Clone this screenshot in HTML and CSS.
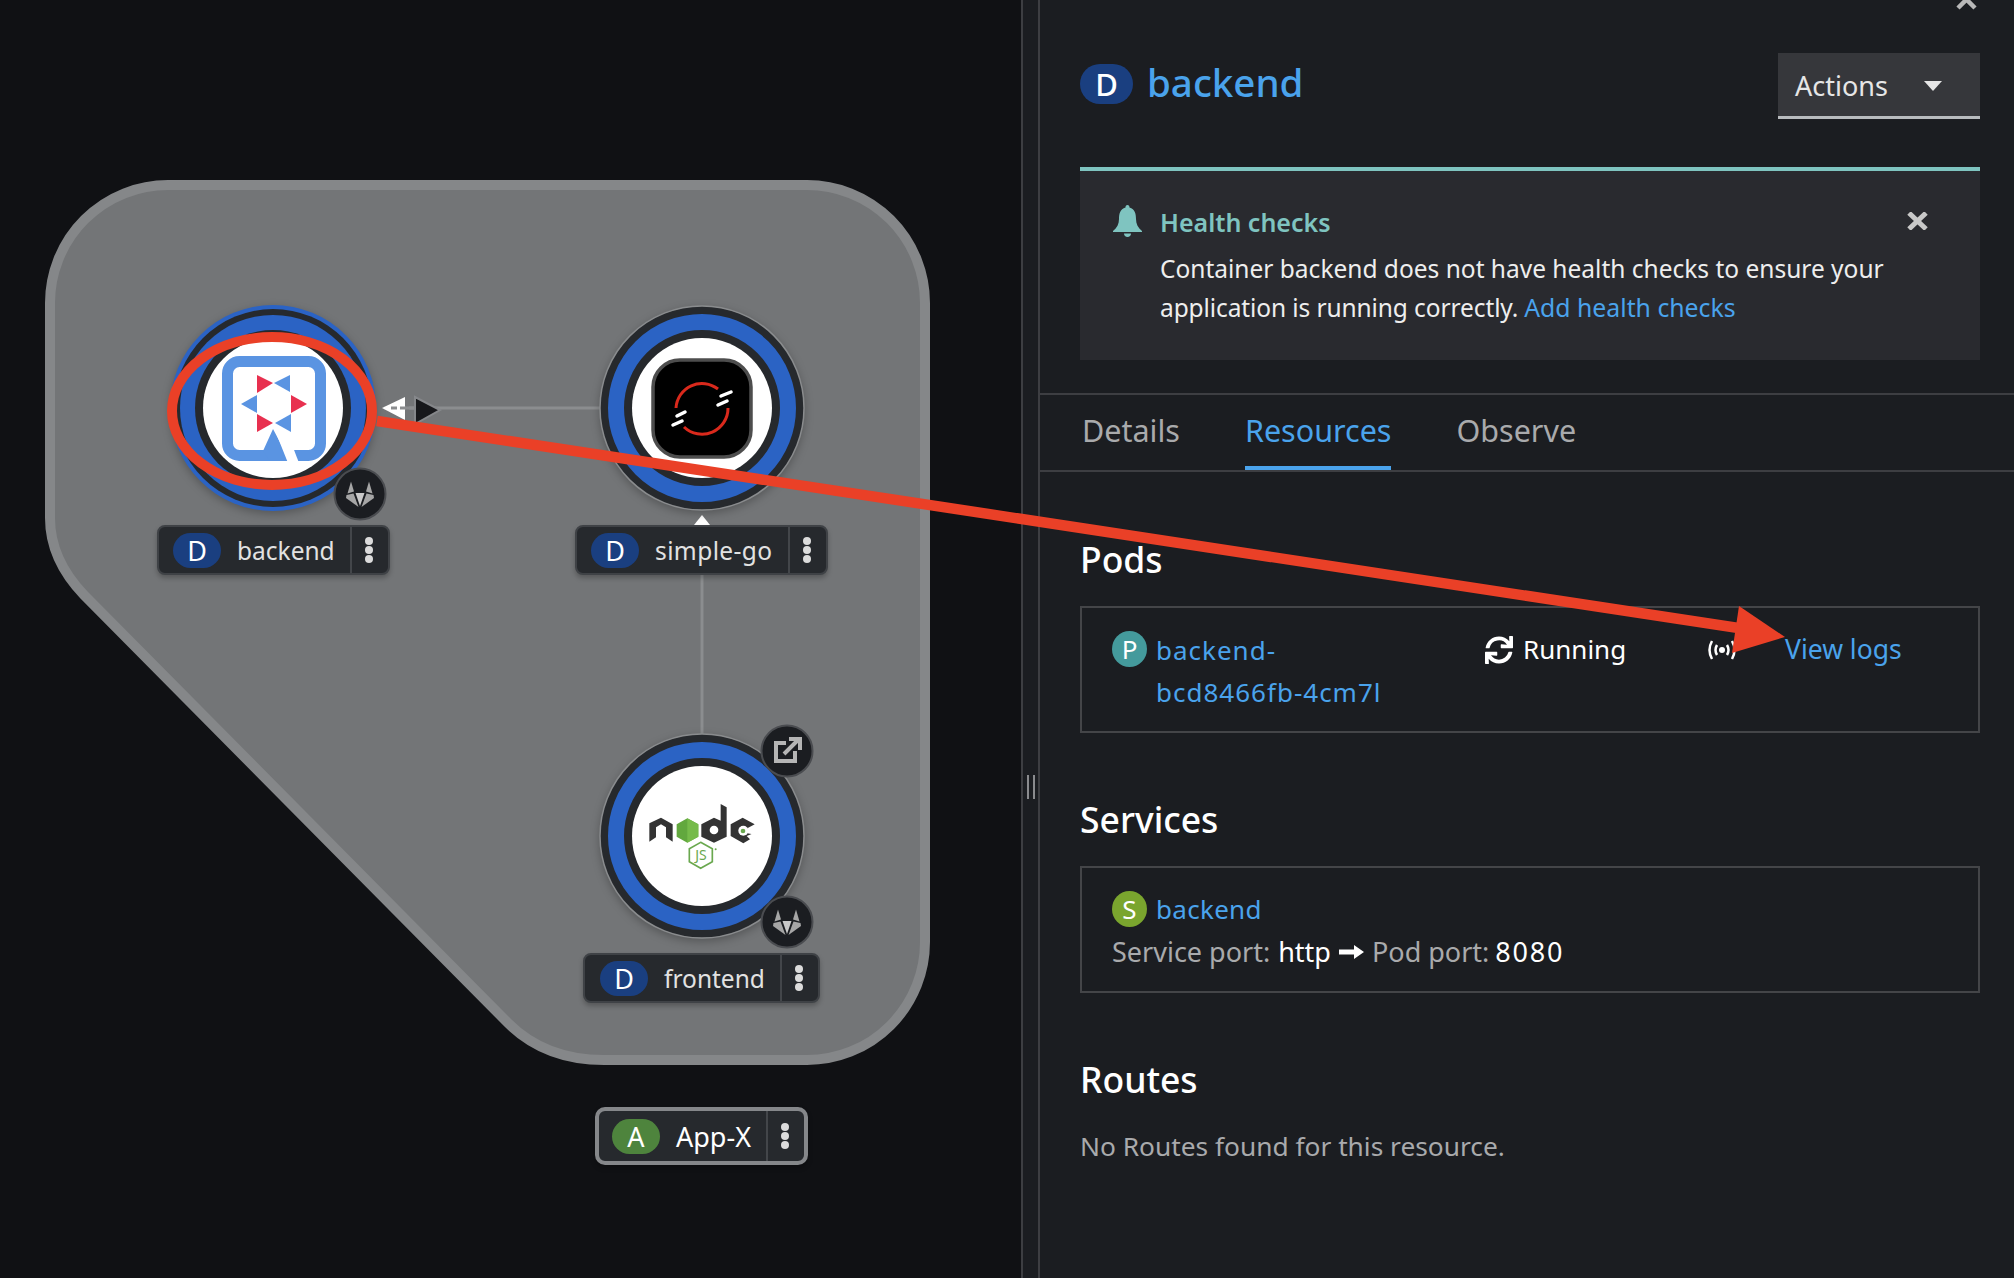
FILE: index.html
```html
<!DOCTYPE html>
<html lang="en">
<head>
    <meta charset="UTF-8">
    <meta name="viewport" content="width=device-width, initial-scale=1.0">
    <title>Topology - backend</title>
    <link rel="stylesheet" href="styles.css">
</head>
<body>
    <svg class="defs" width="0" height="0">
        <symbol id="kebab" viewBox="0 0 8 26">
            <circle cx="4" cy="4" r="4"></circle>
            <circle cx="4" cy="13" r="4"></circle>
            <circle cx="4" cy="22" r="4"></circle>
        </symbol>
        <symbol id="gitlab" viewBox="-14 -13 28 27" overflow="visible">
            <polygon points="-9,-12.500 -12.500,-0.500 -6,-2.500" fill="#a6a6a6"></polygon>
            <polygon points="9,-12.500 12.500,-0.500 6,-2.500" fill="#a6a6a6"></polygon>
            <polygon points="-13.500,1 -14,4 -1.500,13 -6.500,-0.500" fill="#a6a6a6"></polygon>
            <polygon points="13.500,1 14,4 1.500,13 6.500,-0.500" fill="#a6a6a6"></polygon>
            <polygon points="-4.500,-1 4.500,-1 0,12" fill="#c9c9c9"></polygon>
        </symbol>
    </svg>

    <div class="topology">
        <svg class="graph" width="1021" height="1278" viewBox="0 0 1021 1278">
            <!-- application group -->
            <path class="group" d="M168 185H807A118 118 0 0 1 925 303V942A118 118 0 0 1 807 1060H604C565 1060 533 1048 508 1023L84 595C62 572 50 545 50 518V303A118 118 0 0 1 168 185Z"></path>

            <!-- connectors -->
            <line class="edge" x1="384" y1="408" x2="604" y2="408"></line>
            <line class="edge" x1="702" y1="575" x2="702" y2="736"></line>
            <polygon points="382,408 405,397 405,420" fill="#ffffff"></polygon>
            <line class="edge-dash" x1="391" y1="408" x2="414" y2="408"></line>
            <polygon class="edge-head" points="415,397 440,410 415,424"></polygon>
            <polygon points="702,515 710,525 694,525" fill="#ffffff"></polygon>

            <!-- backend node -->
            <g class="node">
                <circle cx="273" cy="408" r="103" fill="#2b63c4"></circle>
                <circle cx="273" cy="408" r="99" fill="#26292d"></circle>
                <circle cx="273" cy="408" r="93" fill="#2b63c4"></circle>
                <circle cx="273" cy="408" r="78" fill="#26292d"></circle>
                <circle cx="273" cy="408" r="70" fill="#ffffff"></circle>
            </g>
            <rect x="227.500" y="361.500" width="93" height="94" rx="12" fill="none" stroke="#5a94e2" stroke-width="11"></rect>
            <polygon points="273,429 263,451 270,461 290,461" fill="#5a94e2"></polygon>
            <polygon points="274,428 288,463 299,463 291,442" fill="#ffffff"></polygon>
            <g fill="#e8304f">
                <polygon points="257,375 273,383 257,393"></polygon>
                <polygon points="307,404 291,395 291,413"></polygon>
                <polygon points="257,414 273,423 257,432"></polygon>
            </g>
            <g fill="#5a94e2">
                <polygon points="290,375 274,383 290,392"></polygon>
                <polygon points="241,404 257,395 257,413"></polygon>
                <polygon points="291,414 275,423 291,432"></polygon>
            </g>
            <circle class="decorator" cx="360" cy="494" r="25.500"></circle>
            <use href="#gitlab" x="346" y="481" width="28" height="27"></use>

            <!-- simple-go node -->
            <g class="node">
                <circle cx="702" cy="408" r="102" fill="#26292d" stroke="#8a8c8e" stroke-width="1.500"></circle>
                <circle cx="702" cy="408" r="86" fill="none" stroke="#2b63c4" stroke-width="16"></circle>
                <circle cx="702" cy="408" r="70" fill="#ffffff"></circle>
            </g>
            <rect x="653" y="360" width="98" height="97" rx="27" fill="#000000" stroke="#4d4d4d" stroke-width="3.500"></rect>
            <path d="M718 389A26 26 0 0 0 676 408M728 408A26 26 0 0 1 684 427" fill="none" stroke="#d9291c" stroke-width="3"></path>
            <path d="M721 396L731 392M718 405L727 401M677 416L685 412M673 425L682 421" fill="none" stroke="#ffffff" stroke-width="3.500" stroke-linecap="round"></path>

            <!-- frontend node -->
            <g class="node">
                <circle cx="702" cy="836" r="102" fill="#26292d" stroke="#8a8c8e" stroke-width="1.500"></circle>
                <circle cx="702" cy="836" r="86" fill="none" stroke="#2b63c4" stroke-width="16"></circle>
                <circle cx="702" cy="836" r="70" fill="#ffffff"></circle>
            </g>
            <g transform="translate(630 780) scale(0.3333)">
                <polygon points="58,130 93,113 128,133 128,185 108,172 108,142 93,133 78,142 78,172 58,185" fill="#333333"></polygon>
                <polygon points="172,115 205,133 205,170 172,188 140,170 140,133" fill="#62a83e"></polygon>
                <polygon points="172,115 205,133 205,170 172,188" fill="#76bb4a"></polygon>
                <polygon points="272,72 290,82 290,170 252,188 214,170 214,133 252,113 272,122" fill="#333333"></polygon>
                <circle cx="252" cy="150" r="13" fill="#ffffff"></circle>
                <polygon points="338,113 374,133 374,158 350,168 360,178 340,190 302,168 302,133" fill="#333333"></polygon>
                <circle cx="340" cy="152" r="15" fill="#ffffff"></circle>
                <polygon points="352,145 380,130 380,165 352,160" fill="#ffffff"></polygon>
                <circle cx="339" cy="153" r="7" fill="#6aa84f"></circle>
                <polygon points="212,187 247,206 247,245 212,265 178,245 178,206" fill="none" stroke="#6aa84f" stroke-width="5"></polygon>
                <text class="js-mark" x="213" y="240">JS</text>
                <circle cx="257" cy="208" r="3" fill="#6aa84f"></circle>
            </g>
            <circle class="decorator" cx="787" cy="751" r="25.500"></circle>
            <path d="M786 743H776V761H795V751M784 754L798 740M789 739H800V750" fill="none" stroke="#b5b5b5" stroke-width="4"></path>
            <circle class="decorator" cx="787" cy="922" r="25.500"></circle>
            <use href="#gitlab" x="773" y="909" width="28" height="27"></use>
        </svg>

        <div class="node-label label-backend">
            <span class="badge badge-deploy">D</span>
            <span class="node-name">backend</span>
            <span class="node-menu"><svg width="8" height="26"><use href="#kebab"></use></svg></span>
        </div>
        <div class="node-label label-go">
            <span class="badge badge-deploy">D</span>
            <span class="node-name">simple-go</span>
            <span class="node-menu"><svg width="8" height="26"><use href="#kebab"></use></svg></span>
        </div>
        <div class="node-label label-frontend">
            <span class="badge badge-deploy">D</span>
            <span class="node-name">frontend</span>
            <span class="node-menu"><svg width="8" height="26"><use href="#kebab"></use></svg></span>
        </div>
        <div class="node-label label-app">
            <span class="badge badge-app">A</span>
            <span class="node-name">App-X</span>
            <span class="node-menu"><svg width="8" height="26"><use href="#kebab"></use></svg></span>
        </div>
    </div>

    <div class="resizer"><span class="grip"></span></div>

    <div class="panel">
        <svg class="panel-close" width="21" height="19" viewBox="0 0 21 19">
            <path d="M2 0L19 17M19 0L2 17" fill="none" stroke="#b8b8b8" stroke-width="4.500"></path>
        </svg>

        <div class="panel-header">
            <div class="panel-title">
                <span class="title-badge">D</span>
                <a class="title-link">backend</a>
            </div>
            <div class="actions">Actions<span class="caret"></span></div>
        </div>

        <div class="alert">
            <svg class="alert-icon" width="29" height="32" viewBox="0 0 29 32">
                <path d="M14.500 0c1.400 0 2 1 2 2.500C22 4 23 9 23 14c0 5 2 9 6 12v1H0v-1c4-3 6-7 6-12C6 9 7 4 12.500 2.500C12.500 1 13 0 14.500 0zM11 28.500h7c0 2-1.500 3.500-3.500 3.500S11 30.500 11 28.500z"></path>
            </svg>
            <div class="alert-body">
                <div class="alert-title">Health checks</div>
                <div>Container backend does not have health checks to ensure your</div>
                <div class="alert-line">
                    <span class="alert-tight">application is running correctly.</span>
                    <a class="link alert-link">Add health checks</a>
                </div>
            </div>
            <svg class="alert-close" width="21" height="18" viewBox="0 0 21 18">
                <path d="M2 1L19 17M19 1L2 17" fill="none" stroke="#c8c8c8" stroke-width="5"></path>
            </svg>
        </div>

        <div class="tabs">
            <span class="tab">Details</span>
            <span class="tab tab-active">Resources</span>
            <span class="tab">Observe</span>
        </div>

        <div class="resources">
            <h2 class="pods-title">Pods</h2>
            <div class="card pod-row">
                <div class="pod-name">
                    <span class="circle-badge badge-pod">P</span>
                    <a class="link pod-link">backend-bcd8466fb-4cm7l</a>
                </div>
                <div class="pod-status">
                    <svg width="28" height="28" viewBox="0 0 512 512">
                        <path fill="#ffffff" d="M440.65 12.57l4 82.77A247.16 247.16 0 0 0 255.83 8C134.73 8 33.91 94.92 12.29 209.82A12 12 0 0 0 24.09 224h49.05a12 12 0 0 0 11.67-9.26 175.91 175.91 0 0 1 317-56.94l-101.46-4.86a12 12 0 0 0-12.57 12v47.41a12 12 0 0 0 12 12H500a12 12 0 0 0 12-12V12a12 12 0 0 0-12-12h-47.37a12 12 0 0 0-11.98 12.57zM255.83 432a175.61 175.61 0 0 1-146-77.8l101.8 4.87a12 12 0 0 0 12.57-12v-47.4a12 12 0 0 0-12-12H12a12 12 0 0 0-12 12V500a12 12 0 0 0 12 12h47.35a12 12 0 0 0 12-12.6l-4.15-82.57A247.17 247.17 0 0 0 255.83 504c121.11 0 221.93-86.92 243.55-201.82a12 12 0 0 0-11.8-14.18h-49.05a12 12 0 0 0-11.67 9.26A175.86 175.86 0 0 1 255.830 432z"></path>
                    </svg>
                    <span>Running</span>
                </div>
                <div class="pod-signal">
                    <svg width="28" height="20" viewBox="0 0 28 20">
                        <circle cx="14" cy="10" r="3" fill="#ffffff"></circle>
                        <path d="M9 5Q6 10 9 15M19 5Q22 10 19 15M4 1Q-1 10 4 19M24 1Q29 10 24 19" fill="none" stroke="#ffffff" stroke-width="2.500"></path>
                    </svg>
                </div>
                <a class="link view-logs">View logs</a>
            </div>

            <h2 class="section-title">Services</h2>
            <div class="card service-card">
                <div class="service-name">
                    <span class="circle-badge badge-service">S</span>
                    <a class="link">backend</a>
                </div>
                <div class="service-ports">
                    <span class="muted">Service port:</span>
                    <span>http</span>
                    <svg width="25" height="14" viewBox="0 0 25 14">
                        <path fill="#ffffff" d="M0 4.500H15V0L25 7L15 14V9.500H0Z"></path>
                    </svg>
                    <span class="muted">Pod port:</span>
                    <span class="port-number">8080</span>
                </div>
            </div>

            <h2 class="section-title">Routes</h2>
            <p class="empty">No Routes found for this resource.</p>
        </div>
    </div>

    <!-- red annotation drawn on top of the whole screen -->
    <svg class="annotation" width="2014" height="1278" viewBox="0 0 2014 1278">
        <ellipse cx="272" cy="411" rx="100" ry="74" fill="none" stroke="#ea4027" stroke-width="10"></ellipse>
        <line x1="377" y1="421" x2="1745" y2="629" stroke="#ea4027" stroke-width="10.500"></line>
        <polygon points="1739,606 1785,637 1732,653" fill="#ea4027"></polygon>
    </svg>
</body>
</html>
```

FILE: styles.css
```css
* {
    box-sizing: border-box;
}

body {
    font-family: "Noto Sans", Arial, sans-serif;
    font-size: 26px;
    line-height: 41px;
    color: #ffffff;
    background-color: #101114;
    margin: 0;
    width: 2014px;
    height: 1278px;
    display: flex;
    position: relative;
    overflow: hidden;
}

.defs {
    position: absolute;
}

h2,
p {
    margin: 0;
}

.link,
.title-link {
    color: #4aa3ec;
}

/* topology canvas */
.topology {
    flex: 0 0 1021px;
    height: 100%;
    position: relative;
    background-color: #101114;
}

.graph {
    position: absolute;
    top: 0;
    left: 0;
}

.group {
    fill: #737577;
    stroke: #858789;
    stroke-width: 10;
}

.edge {
    stroke: #8b8d8f;
    stroke-width: 3;
}

.edge-dash {
    stroke: #8b8d8f;
    stroke-width: 3;
    stroke-dasharray: 6 3;
}

.edge-head {
    fill: #17181b;
    stroke: #85878a;
    stroke-width: 2;
}

.node {
    filter: drop-shadow(0 3px 4px rgba(0, 0, 0, 0.25));
}

.decorator {
    fill: #1b1d21;
    stroke: #4a4c50;
    stroke-width: 2;
}

.js-mark {
    font-family: "Noto Sans", Arial, sans-serif;
    font-size: 42px;
    fill: #6aa84f;
    text-anchor: middle;
}

.node-label {
    position: absolute;
    display: flex;
    align-items: center;
    height: 50px;
    padding-left: 15px;
    background-color: #26292d;
    border: 2px solid #3f4246;
    border-radius: 8px;
    box-shadow: 0 3px 5px rgba(0, 0, 0, 0.25);
    font-size: 24.500px;
    color: #e2e2e2;
}

.label-backend {
    left: 157px;
    top: 525px;
    width: 233px;
    padding-left: 14px;
}

.label-go {
    left: 575px;
    top: 525px;
    width: 253px;
    padding-left: 14px;
}

.label-go .node-name {
    letter-spacing: 0.400px;
}

.label-frontend {
    left: 583px;
    top: 953px;
    width: 237px;
}

.label-app {
    left: 595px;
    top: 1107px;
    width: 213px;
    height: 58px;
    padding-left: 13px;
    border: 4px solid #85878a;
    border-radius: 10px;
    font-size: 27px;
    color: #ffffff;
}

.badge {
    display: flex;
    align-items: center;
    justify-content: center;
    width: 48px;
    height: 35px;
    border-radius: 18px;
    color: #ffffff;
    font-size: 27px;
}

.badge-deploy {
    background-color: #1a3f80;
}

.badge-app {
    background-color: #4e843d;
}

.node-name {
    margin-left: 16px;
    white-space: nowrap;
}

.node-menu {
    display: flex;
    align-items: center;
    justify-content: center;
    width: 38px;
    height: 100%;
    margin-left: auto;
    padding-right: 2px;
    border-left: 2px solid #43464a;
}

.node-menu svg {
    fill: #dcdcdc;
}

/* drag handle between the canvas and the panel */
.resizer {
    flex: 0 0 19px;
    height: 100%;
    display: flex;
    justify-content: center;
    padding-top: 775px;
    background-color: #1b1d21;
    border-left: 2px solid #3d3e42;
    border-right: 2px solid #3d3e42;
}

.grip {
    width: 8px;
    height: 24px;
    border-left: 2px solid #8a8b8e;
    border-right: 2px solid #8a8b8e;
}

/* side panel */
.panel {
    flex: 1;
    height: 100%;
    position: relative;
    background-color: #1b1d21;
}

.panel-close {
    position: absolute;
    top: -9px;
    right: 37px;
}

.panel-header {
    display: flex;
    justify-content: space-between;
    padding: 53px 34px 0 40px;
}

.panel-title {
    display: flex;
    align-items: center;
    gap: 14px;
    height: 62px;
}

.title-badge {
    display: flex;
    align-items: center;
    justify-content: center;
    width: 53px;
    height: 40px;
    border-radius: 20px;
    background-color: #1a3f80;
    font-size: 31px;
    font-weight: 500;
}

.title-link {
    font-size: 38.500px;
    font-weight: 500;
    line-height: 44px;
    position: relative;
    top: -2px;
}

.actions {
    display: flex;
    align-items: center;
    justify-content: space-between;
    width: 202px;
    height: 66px;
    padding: 2px 38px 0 17px;
    background-color: #36373b;
    border-bottom: 3px solid #b8bbbe;
    color: #e6e6e6;
    font-size: 27px;
}

.caret {
    border-left: 9px solid transparent;
    border-right: 9px solid transparent;
    border-top: 10px solid #e6e6e6;
}

.alert {
    display: flex;
    height: 193px;
    margin: 48px 34px 33px 40px;
    padding: 32px 52px 0 33px;
    background-color: #292a2f;
    border-top: 4px solid #7fc4c0;
}

.alert-icon {
    flex: 0 0 29px;
    margin: 2px 18px 0 0;
    fill: #7fc4c0;
}

.alert-body {
    flex: 1;
    line-height: 39px;
    font-size: 24.500px;
    color: #eeeeee;
}

.alert-title {
    margin-bottom: 7px;
    font-size: 25px;
    color: #7fc4c0;
    font-weight: 600;
}

.alert-line {
    display: flex;
    gap: 6px;
}

.alert-tight {
    letter-spacing: -0.100px;
}

.alert-link {
    font-size: 24.800px;
}

.alert-close {
    flex: 0 0 21px;
    margin-top: 9px;
}

.tabs {
    display: flex;
    gap: 65px;
    height: 79px;
    padding-left: 42px;
    border-top: 2px solid #3d3e42;
    border-bottom: 2px solid #3d3e42;
}

.tab {
    display: flex;
    align-items: center;
    font-size: 30.500px;
    color: #a9aaac;
    border-bottom: 4px solid transparent;
}

.tab-active {
    color: #4aa3ec;
    border-bottom-color: #4aa3ec;
}

.resources {
    padding: 0 34px 0 40px;
}

.pods-title,
.section-title {
    font-size: 35.500px;
    line-height: 44px;
    font-weight: 500;
}

.pods-title {
    margin-top: 65px;
    margin-bottom: 25px;
}

.section-title {
    margin-top: 64px;
    margin-bottom: 25px;
}

.card {
    height: 127px;
    border: 2px solid #444548;
    padding-left: 30px;
}

.pod-row {
    display: flex;
    align-items: flex-start;
    padding-top: 21px;
}

.pod-name {
    display: flex;
    flex: 0 0 373px;
}

.pod-link {
    width: 250px;
    line-height: 42px;
    letter-spacing: 1px;
}

.circle-badge {
    flex: 0 0 35px;
    width: 35px;
    height: 36px;
    margin-top: 2px;
    margin-right: 9px;
    border-radius: 50%;
    text-align: center;
    line-height: 36px;
    font-size: 26px;
    color: #ffffff;
}

.badge-pod {
    background-color: #449a9c;
}

.badge-service {
    background-color: #7aa52e;
}

.pod-status {
    display: flex;
    align-items: center;
    gap: 10px;
    flex: 0 0 223px;
}

.pod-signal {
    display: flex;
    align-items: center;
    height: 41px;
    flex: 0 0 77px;
}

.view-logs {
    font-size: 26.500px;
}

.service-card {
    padding-top: 20px;
}

.service-name {
    display: flex;
    align-items: center;
    line-height: 42px;
    margin-bottom: 1px;
    letter-spacing: 0.300px;
}

.service-name .circle-badge {
    margin-top: 0;
}

.service-ports {
    display: flex;
    align-items: center;
    gap: 8px;
    line-height: 42px;
    font-size: 27px;
}

.port-number {
    margin-left: -2px;
    letter-spacing: 1.800px;
}

.muted,
.empty {
    color: #a9aaac;
}

.empty {
    margin-top: 2px;
    font-size: 26.300px;
}

.annotation {
    position: absolute;
    top: 0;
    left: 0;
    pointer-events: none;
}
```
